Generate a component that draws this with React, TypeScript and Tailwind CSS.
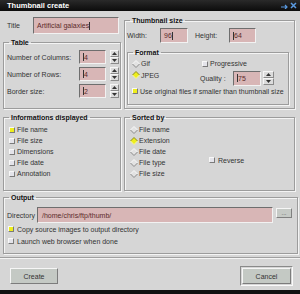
import React from 'react';

const font = 'font-["Liberation_Sans",Arial,sans-serif]';

const Group = ({ title, className, children }: { title: string; className: string; children?: React.ReactNode }) => (
  <fieldset className={`border border-[#9c9c9c] shadow-[inset_1px_1px_0_#f4f4f4,1px_1px_0_#f4f4f4] ${className}`}>
    <legend className="ml-[5px] px-[2px] font-bold text-[7px] leading-[9px] text-[#111]">{title}</legend>
    {children}
  </fieldset>
);

const Caret = () => <span className="inline-block w-px h-[8px] bg-[#333] align-middle" />;

const Field = ({ value, caret, className }: { value: string; caret?: 'before' | 'after'; className: string }) => (
  <div className={`flex items-center bg-[#d8b6b6] border border-t-[#6e6e6e] border-l-[#6e6e6e] border-b-[#f2f2f2] border-r-[#f2f2f2] pl-[3px] text-[7px] text-[#5a2a2a] ${className}`}>
    {caret === 'before' && <Caret />}
    <span>{value}</span>
    {caret === 'after' && <Caret />}
  </div>
);

const Spin = ({ className }: { className: string }) => (
  <div className={`flex flex-col ${className}`}>
    <div className="flex-1 flex items-center justify-center bg-[#dcdcdc] border border-t-[#f6f6f6] border-l-[#f6f6f6] border-b-[#8a8a8a] border-r-[#8a8a8a]">
      <svg width="5" height="3" viewBox="0 0 5 3"><polygon points="2.5,0 5,3 0,3" fill="#333" /></svg>
    </div>
    <div className="flex-1 flex items-center justify-center bg-[#dcdcdc] border border-t-[#f6f6f6] border-l-[#f6f6f6] border-b-[#8a8a8a] border-r-[#8a8a8a]">
      <svg width="5" height="3" viewBox="0 0 5 3"><polygon points="0,0 5,0 2.5,3" fill="#333" /></svg>
    </div>
  </div>
);

const Check = ({ on }: { on?: boolean }) => (
  <span
    className={`inline-block w-[6px] h-[6px] border border-t-[#f8f8f8] border-l-[#f8f8f8] border-b-[#7a7a7a] border-r-[#7a7a7a] ${on ? 'bg-[#eeee1c]' : 'bg-[#e4e4ea]'}`}
  />
);

const Radio = ({ on }: { on?: boolean }) => (
  <svg width="8" height="8" viewBox="0 0 8 8" className="shrink-0">
    <polygon points="4,0.5 7.5,4 4,7.5 0.5,4" fill={on ? '#eeee1c' : '#e2e2e2'} />
    <polyline points="0.5,4 4,0.5 7.5,4" fill="none" stroke={on ? '#8a8a20' : '#f8f8f8'} strokeWidth="1" />
    <polyline points="0.5,4 4,7.5 7.5,4" fill="none" stroke={on ? '#f6f6a0' : '#8a8a8a'} strokeWidth="1" />
  </svg>
);

const CheckRow = ({ label, on, className }: { label: string; on?: boolean; className: string }) => (
  <div className={`flex items-center gap-[2px] text-[7px] text-[#333] ${className}`}>
    <Check on={on} />
    <span>{label}</span>
  </div>
);

const RadioRow = ({ label, on, className }: { label: string; on?: boolean; className: string }) => (
  <div className={`flex items-center gap-[1px] text-[7px] text-[#333] ${className}`}>
    <Radio on={on} />
    <span>{label}</span>
  </div>
);

const App = () => {
  const tableRows = [
    { label: 'Number of Columns:', value: '4' },
    { label: 'Number of Rows:', value: '4' },
    { label: 'Border size:', value: '2' },
  ];
  const infos = [
    { label: 'File name', on: true },
    { label: 'File size' },
    { label: 'Dimensions' },
    { label: 'File date' },
    { label: 'Annotation' },
  ];
  const sorts = [
    { label: 'File name' },
    { label: 'Extension', on: true },
    { label: 'File date' },
    { label: 'File type' },
    { label: 'File size' },
  ];

  return (
    <div className={`w-[300px] h-[294px] bg-[#d6d6d6] flex flex-col overflow-hidden ${font} text-[7px] leading-[9px] text-[#333]`}>
      {/* Title bar */}
      <div className="h-[11px] bg-gradient-to-b from-[#2a2a2a] to-[#0c0c0c] flex items-center pl-[7px] pr-[3px]">
        <span className="text-white font-bold text-[7.5px]">Thumbnail create</span>
        <div className="ml-auto flex items-center gap-[2px]">
          <svg width="7" height="6" viewBox="0 0 7 6"><path d="M0 4 H6 M4 2 L6 4 L4 6" stroke="#5a9ae0" strokeWidth="1.2" fill="none" /></svg>
          <svg width="7" height="7" viewBox="0 0 7 7"><path d="M1 1 L6 6 M6 1 L1 6" stroke="#5a9ae0" strokeWidth="1.5" /></svg>
        </div>
      </div>

      {/* Top section */}
      <div className="flex">
        <div className="ml-[3px] w-[118px] pt-[6px] flex flex-col">
          <div className="flex items-center h-[17px]">
            <span className="w-[30px] pl-[4px]">Title</span>
            <Field value="Artificial galaxies" caret="after" className="w-[86px] h-[17px]" />
          </div>
          <Group title="Table" className="mt-[4px] h-[71px] w-[118px]">
            <div className="pt-[3px] flex flex-col gap-[3px]">
              {tableRows.map(r => (
                <div key={r.label} className="flex items-center h-[14px]">
                  <span className="w-[75px] pl-[3px]">{r.label}</span>
                  <Field value={r.value} caret="before" className="w-[27px] h-[14px]" />
                  <Spin className="ml-[4px] w-[9px] h-[14px]" />
                </div>
              ))}
            </div>
          </Group>
        </div>

        <div className="ml-[3px] w-[171px] pt-[5px]">
          <Group title="Thumbnail size" className="h-[93px] w-[171px]">
            <div className="pt-[3px] flex items-center h-[18px]">
              <span className="w-[35px] pl-[2px]">Width:</span>
              <Field value="96" caret="after" className="w-[28px] h-[15px]" />
              <span className="ml-[7px] w-[34px]">Height:</span>
              <Field value="64" caret="before" className="w-[27px] h-[15px]" />
            </div>
            <Group title="Format" className="mt-[5px] ml-[2px] w-[162px] h-[57px]">
              <div className="flex mt-[2px] h-[9px] items-center">
                <RadioRow label="Gif" className="w-[74px] pl-[4px]" />
                <CheckRow label="Progressive" className="" />
              </div>
              <div className="flex mt-[2px] h-[16px]">
                <RadioRow label="JPEG" on className="w-[72px] pl-[4px] h-[10px] self-start" />
                <div className="flex items-center">
                  <span className="w-[33px]">Quality :</span>
                  <Field value="75" caret="before" className="w-[28px] h-[15px]" />
                  <Spin className="ml-[2px] w-[11px] h-[14px]" />
                </div>
              </div>
              <CheckRow label="Use original files if smaller than thumbnail size" on className="pl-[4px] h-[10px]" />
            </Group>
          </Group>
        </div>
      </div>

      {/* Middle section */}
      <div className="flex mt-[4px]">
        <Group title="Informations displayed" className="ml-[3px] w-[118px] h-[78px]">
          <div className="pt-[2px] flex flex-col">
            {infos.map(i => (
              <CheckRow key={i.label} label={i.label} on={i.on} className="h-[11px] pl-[5px]" />
            ))}
          </div>
        </Group>
        <Group title="Sorted by" className="ml-[3px] w-[171px] h-[78px]">
          <div className="flex">
            <div className="pt-[2px] flex flex-col w-[84px]">
              {sorts.map(s => (
                <RadioRow key={s.label} label={s.label} on={s.on} className="h-[11px] pl-[5px]" />
              ))}
            </div>
            <div className="pt-[33px]">
              <CheckRow label="Reverse" className="h-[10px] gap-[3px]" />
            </div>
          </div>
        </Group>
      </div>

      {/* Output */}
      <Group title="Output" className="mt-[2px] ml-[3px] w-[295px] h-[61px]">
        <div className="mt-[5px] flex items-center h-[16px]">
          <span className="w-[33px] pl-[3px]">Directory</span>
          <Field value="/home/chris/ftp/thumb/" className="w-[236px] h-[16px] pl-[4px]" />
          <button className="ml-[3px] w-[16px] h-[10px] self-start mt-[1px] bg-[#c6cac6] border border-t-[#f6f6f6] border-l-[#f6f6f6] border-b-[#808080] border-r-[#808080] text-[6px] leading-[6px] text-[#444]">...</button>
        </div>
        <CheckRow label="Copy source images to output directory" on className="h-[12px] pl-[4px] gap-[3px]" />
        <CheckRow label="Launch web browser when done" className="h-[12px] pl-[4px] gap-[3px]" />
      </Group>

      {/* Separator */}
      <div className="mt-[3px] border-t border-t-[#a0a0a0] border-b border-b-[#f4f4f4]" />

      {/* Buttons */}
      <div className="flex items-center justify-between mt-[7px] pl-[10px] pr-[7px] h-[20px]">
        <button className="w-[48px] h-[16px] bg-[#c4c9c4] border border-t-[#f6f6f6] border-l-[#f6f6f6] border-b-[#7c7c7c] border-r-[#7c7c7c] text-[7px] text-[#333]">Create</button>
        <div className="p-px border border-t-[#8a8a8a] border-l-[#8a8a8a] border-b-[#fafafa] border-r-[#fafafa]">
          <button className="w-[49px] h-[16px] bg-[#c4c9c4] border border-t-[#f6f6f6] border-l-[#f6f6f6] border-b-[#7c7c7c] border-r-[#7c7c7c] text-[7px] text-[#333]">Cancel</button>
        </div>
      </div>

      <div className="flex-1" />
      <div className="h-[4px] bg-[#111]" />
    </div>
  );
};

export default App;
